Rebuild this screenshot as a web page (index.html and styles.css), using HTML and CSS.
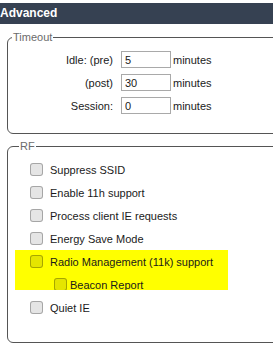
FILE: index.html
```html
<!DOCTYPE html>
<html>
<head>
    <meta charset="UTF-8">
    <title>Advanced</title>
    <link rel="stylesheet" href="styles.css">
</head>
<body>
    <div class="title">Advanced</div>
    <fieldset class="group timeout">
        <legend>Timeout</legend>
        <div class="timeout-grid">
            <label>Idle: (pre)</label><input type="text" value="5"><span>minutes</span>
            <label>(post)</label><input type="text" value="30"><span>minutes</span>
            <label>Session:</label><input type="text" value="0"><span>minutes</span>
        </div>
    </fieldset>
    <fieldset class="group rf">
        <legend>RF</legend>
        <div class="row"><span class="box"></span>Suppress SSID</div>
        <div class="row"><span class="box"></span>Enable 11h support</div>
        <div class="row"><span class="box"></span>Process client IE requests</div>
        <div class="row"><span class="box"></span>Energy Save Mode</div>
        <div class="mark">
            <div class="row"><span class="box"></span>Radio Management (11k) support</div>
            <div class="row sub"><span class="box"></span>Beacon Report</div>
        </div>
        <div class="row after-mark"><span class="box"></span>Quiet IE</div>
    </fieldset>
</body>
</html>
```

FILE: styles.css
```css
* {
    box-sizing: border-box;
}
body {
    margin: 0;
    padding-top: 3px;
    width: 273px;
    height: 350px;
    overflow: hidden;
    background: #fff;
    font-family: Arial, "Liberation Sans", sans-serif;
    font-size: 11px;
    color: #1a1a1a;
}
.title {
    height: 21px;
    line-height: 21px;
    background: #364152;
    color: #fff;
    font-weight: bold;
    font-size: 12px;
}
.group {
    margin: 6px 0 0 7px;
    width: 300px;
    border: 1px solid #555;
    border-radius: 6px;
    padding: 0;
    min-width: 0;
}
.group legend {
    margin-left: 4px;
    padding: 0 1px;
    color: #6b6b6b;
    font-size: 11px;
    line-height: 14px;
}
.timeout {
    padding: 4px 0 16px 0;
}
.timeout-grid {
    display: grid;
    grid-template-columns: 105px 58px auto;
    grid-auto-rows: 23px;
    align-items: center;
}
.timeout-grid label {
    text-align: right;
}
.timeout-grid input {
    margin: 0 0 0 8px;
    width: 50px;
    height: 17px;
    border: 1px solid #a9a9a9;
    padding: 0 3px;
    font-family: Arial, "Liberation Sans", sans-serif;
    font-size: 11px;
    color: #1a1a1a;
}
.timeout-grid span {
    padding-left: 2px;
}
.rf {
    margin-top: 5px;
    padding: 5px 0 23px 7px;
}
.row {
    height: 23px;
    display: flex;
    align-items: center;
    padding-left: 15px;
}
.box {
    width: 13px;
    height: 13px;
    margin-right: 7px;
    border: 1px solid rgba(0, 0, 0, 0.28);
    border-radius: 3px;
    background: rgba(0, 0, 0, 0.1);
}
.mark {
    width: 213px;
    height: 40px;
    overflow: hidden;
    background: #ffff00;
}
.sub {
    padding-left: 39px;
}
.sub .box {
    margin-right: 3px;
}
.after-mark {
    margin-top: 6px;
}
```
